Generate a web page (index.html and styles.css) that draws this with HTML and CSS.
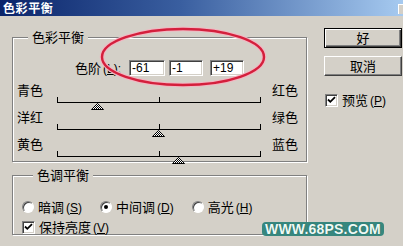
FILE: index.html
```html
<!DOCTYPE html>
<html lang="zh">
<head>
<meta charset="utf-8">
<link rel="stylesheet" href="styles.css">
</head>
<body>
<div class="window">
  <div class="titlebar"><span class="title">色彩平衡</span><span class="close"></span></div>
  <div class="main">
    <div class="left">
      <div class="group g1">
        <span class="legend">色彩平衡</span>
        <div class="levels">
          <span class="lvl-label">色阶<span class="mn">(<u>L</u>):</span></span>
          <span class="field f1">-61</span>
          <span class="field f2">-1</span>
          <span class="field f3">+19</span>
        </div>
        <div class="slider">
          <div class="labels"><span>青色</span><span>红色</span></div>
          <div class="track"></div>
          <div class="thumbs"><svg class="thumb" style="margin-left: calc(19.5% - 6px)" width="13" height="7" viewBox="0 0 13 7"><defs><pattern id="h1" width="2" height="2" patternUnits="userSpaceOnUse"><rect width="2" height="2" fill="#fff"/><rect width="1" height="1" fill="#000"/><rect x="1" y="1" width="1" height="1" fill="#000"/></pattern></defs><polygon points="6.5,0.5 12.5,6.5 0.5,6.5" fill="url(#h1)" stroke="#000" stroke-width="1"/></svg></div>
        </div>
        <div class="slider">
          <div class="labels"><span>洋红</span><span>绿色</span></div>
          <div class="track"></div>
          <div class="thumbs"><svg class="thumb" style="margin-left: calc(49.5% - 6px)" width="13" height="7" viewBox="0 0 13 7"><polygon points="6.5,0.5 12.5,6.5 0.5,6.5" fill="url(#h1)" stroke="#000" stroke-width="1"/></svg></div>
        </div>
        <div class="slider">
          <div class="labels"><span>黄色</span><span>蓝色</span></div>
          <div class="track"></div>
          <div class="thumbs"><svg class="thumb" style="margin-left: calc(59.5% - 6px)" width="13" height="7" viewBox="0 0 13 7"><polygon points="6.5,0.5 12.5,6.5 0.5,6.5" fill="url(#h1)" stroke="#000" stroke-width="1"/></svg></div>
        </div>
      </div>
      <div class="group g2">
        <span class="legend">色调平衡</span>
        <div class="radios">
          <label class="opt"><span class="radio"></span><span>暗调<span class="mn">(<u>S</u>)</span></span></label>
          <label class="opt"><span class="radio on"></span><span>中间调<span class="mn">(<u>D</u>)</span></span></label>
          <label class="opt"><span class="radio"></span><span>高光<span class="mn">(<u>H</u>)</span></span></label>
        </div>
        <label class="opt check-row"><span class="checkbox"><svg width="9" height="9" viewBox="0 0 9 9"><path d="M1 3.5 L3.3 5.8 L8 1.2" fill="none" stroke="#000" stroke-width="1.8"/></svg></span><span>保持亮度<span class="mn">(<u>V</u>)</span></span></label>
      </div>
    </div>
    <div class="right">
      <div class="btn default">好</div>
      <div class="btn">取消</div>
      <label class="opt preview"><span class="checkbox"><svg width="9" height="9" viewBox="0 0 9 9"><path d="M1 3.5 L3.3 5.8 L8 1.2" fill="none" stroke="#000" stroke-width="1.8"/></svg></span><span>预览<span class="mn">(<u>P</u>)</span></span></label>
    </div>
  </div>
  <svg class="ellipse" width="403" height="100" viewBox="0 0 403 100">
    <ellipse cx="183" cy="57" rx="81" ry="28" fill="none" stroke="#f3b6c2" stroke-width="4.5"/>
    <ellipse cx="183" cy="57" rx="81" ry="28" fill="none" stroke="#d41f3c" stroke-width="2.4"/>
  </svg>
  <div class="watermark">WWW.68PS.COM</div>
</div>
</body>
</html>
```

FILE: styles.css
```css
* { box-sizing: border-box; }
html, body {
  margin: 0;
  padding: 0;
  width: 403px;
  height: 246px;
  overflow: hidden;
  background: #d4d0c8;
}
.window {
  position: relative;
  width: 403px;
  height: 246px;
  font-family: "Noto Sans CJK SC", "Liberation Sans", sans-serif;
  font-size: 13px;
  line-height: 14px;
  color: #000;
}
.titlebar {
  height: 16px;
  background: linear-gradient(to right, #0a246a 0%, #3a5fa0 45%, #a6caf0 100%);
  display: flex;
  align-items: center;
  padding-left: 3px;
  overflow: hidden;
}
.title {
  color: #fff;
  font-weight: bold;
  font-size: 12px;
  letter-spacing: 0.6px;
  line-height: 14px;
}
.close {
  margin-left: auto;
  width: 16px;
  height: 10px;
  margin-right: -11px;
  margin-top: 2px;
  background: #d4d0c8;
  border-left: 1px solid #fff;
  border-top: 1px solid #fff;
}
.main {
  display: flex;
  padding: 12px 0 0 12px;
}
.left {
  width: 295px;
  margin-top: 9px;
}
.group {
  border: 1px solid #808080;
  box-shadow: inset 1px 1px #fff, 1px 1px #fff;
  padding: 0 4px;
}
.legend {
  display: inline-block;
  margin: -8px 0 0 11px;
  padding: 0 4px 0 4px;
  background: #d4d0c8;
  line-height: 14px;
  vertical-align: top;
}
.g1 { height: 125px; }
.g2 { height: 60px; margin-top: 13px; padding-left: 9px; }
.levels {
  display: flex;
  align-items: center;
  margin-top: 8px;
  height: 16px;
}
.lvl-label { margin-left: 58px; margin-right: 8px; }
.mn { font-family: "Liberation Sans", sans-serif; font-size: 12px; margin-left: 2px; }
.field {
  height: 16px;
  background: #fff;
  border: 1px solid;
  border-color: #808080 #fff #fff #808080;
  box-shadow: inset 1px 1px #404040, inset -1px -1px #d4d0c8;
  font-family: "Liberation Sans", sans-serif;
  font-size: 12px;
  line-height: 14px;
  padding-left: 2px;
}
.f1 { width: 36px; }
.f2 { width: 34px; margin-left: 4px; }
.f3 { width: 34px; margin-left: 7px; }
.slider { height: 27px; }
.levels + .slider { margin-top: 7px; }
.labels {
  display: flex;
  justify-content: space-between;
  height: 14px;
  padding-right: 4px;
}
.track {
  position: relative;
  margin-left: 40px;
  width: 204px;
  height: 6px;
  border: 1px solid #000;
  border-top: 0;
}
.track::after {
  content: "";
  position: absolute;
  left: 101px;
  bottom: 0;
  width: 1px;
  height: 5px;
  background: #000;
}
.thumbs {
  margin-left: 40px;
  width: 204px;
  height: 7px;
  display: flex;
  align-items: flex-end;
}
.thumb {
  display: block;
  flex: none;
}
.radios {
  display: flex;
  gap: 18px;
  margin-top: 10px;
}
.opt {
  display: flex;
  align-items: center;
  gap: 4px;
  height: 14px;
}
.radio {
  width: 12px;
  height: 12px;
  border-radius: 50%;
  background: #fff;
  border: 1px solid;
  border-color: #808080 #fff #fff #808080;
  box-shadow: inset 1px 1px #404040;
  display: flex;
  align-items: center;
  justify-content: center;
}
.radio.on::after {
  content: "";
  width: 4px;
  height: 4px;
  border-radius: 50%;
  background: #000;
}
.checkbox {
  width: 13px;
  height: 13px;
  background: #fff;
  border: 1px solid;
  border-color: #808080 #fff #fff #808080;
  box-shadow: inset 1px 1px #404040, inset -1px -1px #d4d0c8;
  display: flex;
  align-items: center;
  justify-content: center;
}
.check-row { margin-top: 6px; }
.right {
  margin-left: 17px;
  display: flex;
  flex-direction: column;
}
.btn {
  width: 78px;
  height: 20px;
  background: #d4d0c8;
  border: 1px solid;
  border-color: #fff #404040 #404040 #fff;
  box-shadow: inset -1px -1px #808080;
  display: flex;
  align-items: center;
  justify-content: center;
  line-height: 14px;
}
.btn.default {
  border: 1px solid #000;
  box-shadow: inset 1px 1px #fff, inset -1px -1px #404040, inset -2px -2px #808080;
}
.btn + .btn { margin-top: 8px; }
.preview { margin-top: 17px; margin-left: 1px; }
.ellipse {
  position: absolute;
  left: 0;
  top: 0;
  pointer-events: none;
}
.watermark {
  position: absolute;
  left: 262px;
  top: 222px;
  height: 14px;
  padding: 0 3px;
  background: #37877e;
  border-radius: 4px;
  color: #eefaf5;
  font-family: "Liberation Sans", sans-serif;
  font-weight: bold;
  font-size: 14px;
  line-height: 14px;
  letter-spacing: 0.2px;
  text-shadow: 0 0 1px #1d5c55;
}
```
